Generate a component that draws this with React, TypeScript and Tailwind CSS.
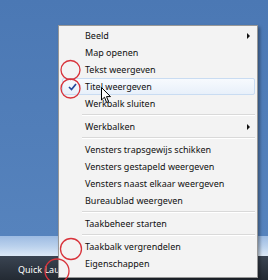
import React from "react";

type Entry =
  | { kind: "item"; label: string; arrow?: boolean; checked?: boolean; hover?: boolean }
  | { kind: "sep" };

const entries: Entry[] = [
  { kind: "item", label: "Beeld", arrow: true },
  { kind: "item", label: "Map openen" },
  { kind: "item", label: "Tekst weergeven" },
  { kind: "item", label: "Titel weergeven", checked: true, hover: true },
  { kind: "item", label: "Werkbalk sluiten" },
  { kind: "sep" },
  { kind: "item", label: "Werkbalken", arrow: true },
  { kind: "sep" },
  { kind: "item", label: "Vensters trapsgewijs schikken" },
  { kind: "item", label: "Vensters gestapeld weergeven" },
  { kind: "item", label: "Vensters naast elkaar weergeven" },
  { kind: "item", label: "Bureaublad weergeven" },
  { kind: "sep" },
  { kind: "item", label: "Taakbeheer starten" },
  { kind: "sep" },
  { kind: "item", label: "Taakbalk vergrendelen" },
  { kind: "item", label: "Eigenschappen" },
];

function MenuRow({ entry }: { entry: Entry }) {
  if (entry.kind === "sep") {
    return (
      <div className="h-[6px] flex flex-col justify-center ml-[23px] mr-[2px]">
        <div className="h-px bg-[#d9d9d9]" />
        <div className="h-px bg-white" />
      </div>
    );
  }
  return (
    <div
      className={
        entry.hover
          ? "relative h-[17px] flex items-center ml-[3px] mr-[2px] pl-[22px] rounded-[2px] border border-[#c9dcf2] bg-gradient-to-b from-[#f7fafe] to-[#e8f0fa]"
          : "relative h-[17px] flex items-center pl-[26px]"
      }
    >
      {entry.checked && (
        <svg
          className="absolute left-[5px] top-[4px]"
          width="9"
          height="8"
          viewBox="0 0 9 8"
        >
          <path d="M1 4 L3.5 6.5 L8 1" fill="none" stroke="#24479a" strokeWidth="1.7" />
        </svg>
      )}
      <span className="text-[9px] leading-none text-[#111] whitespace-nowrap">
        {entry.label}
      </span>
      {entry.arrow && (
        <div className="absolute right-[7px] top-[6px] w-0 h-0 border-y-[3px] border-y-transparent border-l-[3px] border-l-[#111]" />
      )}
    </div>
  );
}

export default function App() {
  return (
    <div
      className="relative w-[268px] h-[280px] overflow-hidden flex flex-col"
      style={{ fontFamily: '"Noto Sans", "Open Sans", sans-serif' }}
    >
      {/* desktop */}
      <div className="flex-1 bg-gradient-to-b from-[#4b78b4] to-[#5683bd]" />
      {/* taskbar glass band */}
      <div className="h-[20px] bg-gradient-to-b from-[#9dbbe2] via-[#b9d0ec] to-[#dde9f6]" />
      <div className="h-[24px] bg-gradient-to-b from-[#3a4452] to-[#232a33] pl-[18px] pt-[9px] text-[9px] leading-none text-white">
        <span className="whitespace-nowrap">Quick Lau</span>
      </div>

      {/* context menu */}
      <div className="absolute left-[58px] top-[25px] w-[200px] border border-[#979797] bg-[#f3f3f3] pt-px pb-[5px] shadow-[2px_2px_3px_rgba(0,0,0,0.35)]">
        {entries.map((e, i) => (
          <MenuRow key={i} entry={e} />
        ))}
      </div>

      {/* mouse pointer */}
      <svg className="absolute left-[101px] top-[87px]" width="11" height="17" viewBox="0 0 11 17">
        <path
          d="M0.5 0.5 L0.5 13 L3.5 10.2 L5.6 15.5 L7.6 14.7 L5.5 9.6 L9.5 9.6 Z"
          fill="white"
          stroke="black"
          strokeWidth="1"
          strokeLinejoin="round"
        />
      </svg>

      {/* red annotation circles */}
      <svg className="absolute inset-0 pointer-events-none" width="268" height="280" viewBox="0 0 268 280">
        <g fill="none" stroke="#d8333b" strokeWidth="1.3">
          <circle cx="70.5" cy="70" r="9.5" />
          <circle cx="70.5" cy="88.5" r="9.5" />
          <circle cx="71" cy="249" r="10.5" />
          <circle cx="57" cy="271" r="12" />
        </g>
      </svg>
    </div>
  );
}
